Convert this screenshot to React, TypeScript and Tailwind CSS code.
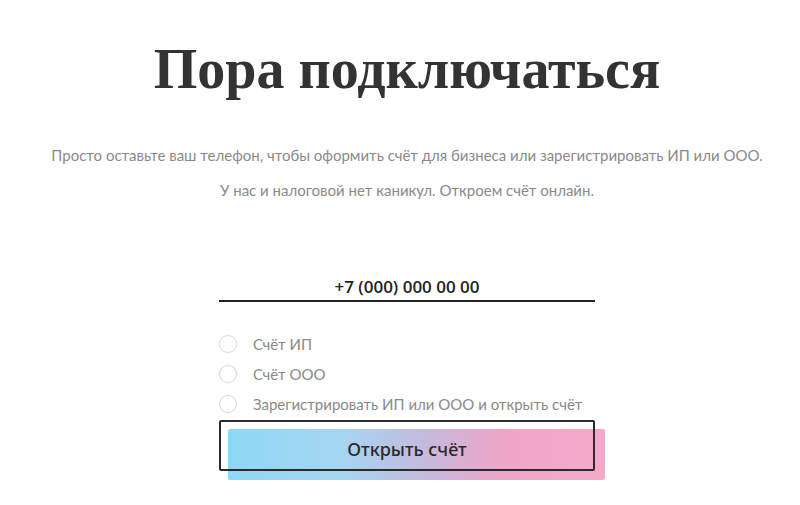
import React, { useState } from 'react';

const sans = { fontFamily: '"Noto Sans", "Liberation Sans", sans-serif' };

const options = ['Счёт ИП', 'Счёт ООО', 'Зарегистрировать ИП или ООО и открыть счёт'];

export default function App() {
  const [phone, setPhone] = useState('');
  const [choice, setChoice] = useState<number | null>(null);

  return (
    <div className="w-[800px] h-[505px] bg-white flex flex-col items-center overflow-hidden pl-[14px]">
      <h1 className="mt-[34px] text-[56px] leading-[70px] font-bold text-[#333333] font-['Liberation_Serif',serif]">
        Пора подключаться
      </h1>
      <p className="mt-[41px] text-[15px] leading-[20px] text-[#8a8a8a] font-['Lato',sans-serif]">
        Просто оставьте ваш телефон, чтобы оформить счёт для бизнеса или зарегистрировать ИП или ООО.
      </p>
      <p className="mt-[15px] text-[15px] leading-[20px] text-[#8a8a8a] font-['Lato',sans-serif]">
        У нас и налоговой нет каникул. Откроем счёт онлайн.
      </p>

      <div className="w-[376px] mt-[72px] flex flex-col">
        <input
          value={phone}
          onChange={(e) => setPhone(e.target.value)}
          placeholder="+7 (000) 000 00 00"
          className="w-full h-[30px] text-center text-[17px] font-semibold text-[#222] placeholder:text-[#222] border-b-2 border-[#222] outline-none font-['Open_Sans',sans-serif]"
        />

        <div className="mt-[32px] flex flex-col gap-[10px]">
          {options.map((o, i) => (
            <label key={o} className="flex items-center gap-[16px] cursor-pointer h-[20px]" onClick={() => setChoice(i)}>
              <span className="w-[18px] h-[18px] rounded-full border border-[#d6d6d6] flex items-center justify-center">
                {choice === i && <span className="w-[8px] h-[8px] rounded-full bg-[#333]" />}
              </span>
              <span className="text-[15px] text-[#8a8a8a] font-['Lato',sans-serif]">{o}</span>
            </label>
          ))}
        </div>

        <div className="relative mt-[6px] h-[51px]">
          <div className="absolute left-[9px] top-[9px] w-[377px] h-[51px] rounded-[2px] bg-[linear-gradient(90deg,#8ed8f5_0%,#a6d6f2_30%,#c4badd_52%,#eea5c8_72%,#f5aac9_100%)]" />
          <button className="relative w-full h-full pt-[8px] border-2 border-[#2a2a2a] rounded-[2px] text-[18px] text-[#2a2a2a] font-medium" style={sans}>
            Открыть счёт
          </button>
        </div>
      </div>
    </div>
  );
}
